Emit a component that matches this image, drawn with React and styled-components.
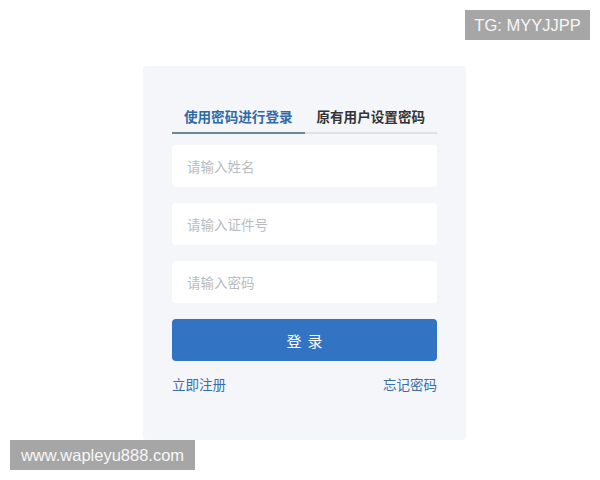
import React from "react";
import styled, { createGlobalStyle } from "styled-components";

const Global = createGlobalStyle`
  html, body { margin: 0; padding: 0; background: #ffffff; }
  body { font-family: "Noto Sans CJK SC", "Noto Sans", sans-serif; }
  * { box-sizing: border-box; }
`;

const Page = styled.div`
  position: relative;
  width: 600px;
  height: 480px;
  padding: 66px 0 0 143px;
  overflow: hidden;
`;

const Card = styled.div`
  width: 323px;
  height: 374px;
  background: #f4f6fa;
  border-radius: 4px;
  padding: 34px 29px 0 29px;
  display: flex;
  flex-direction: column;
`;

const Tabs = styled.div`
  display: flex;
  margin-bottom: 11px;
`;

const Tab = styled.div`
  flex: 1;
  height: 34px;
  line-height: 32px;
  text-align: center;
  font-size: 13.6px;
  font-weight: 700;
  color: ${(p) => (p.$active ? "#2f69a8" : "#333333")};
  border-bottom: 2px solid ${(p) => (p.$active ? "#6f8696" : "#dde2e8")};
`;

const Field = styled.input`
  height: 42px;
  width: 100%;
  border: none;
  outline: none;
  border-radius: 4px;
  background: #ffffff;
  padding: 0 15px;
  margin-bottom: 16px;
  font-family: "Noto Sans CJK SC", sans-serif;
  font-size: 13.5px;
  color: #333;
  &::placeholder { color: #b8bcc2; }
`;

const LoginButton = styled.button`
  height: 42px;
  width: 100%;
  border: none;
  border-radius: 4px;
  background: #3273c4;
  color: #ffffff;
  font-family: "Noto Sans CJK SC", sans-serif;
  font-size: 15px;
  letter-spacing: 6px;
  text-indent: 6px;
  cursor: pointer;
`;

const Links = styled.div`
  display: flex;
  justify-content: space-between;
  margin-top: 13px;
  font-size: 13.5px;
  line-height: 20px;
`;

const Link = styled.a`
  color: #3a6ea8;
  text-decoration: none;
`;

const Watermark = styled.div`
  position: absolute;
  height: 30px;
  line-height: 30px;
  padding: 0;
  background: #a6a6a6;
  color: #f7f7f7;
  font-family: "Liberation Sans", Arial, sans-serif;
  font-size: 16.5px;
  top: ${(p) => p.$top}px;
  left: ${(p) => p.$left}px;
  width: ${(p) => p.$width}px;
  text-align: center;
  white-space: nowrap;
`;

export default function App() {
  return (
    <>
      <Global />
      <Page>
        <Card>
          <Tabs>
            <Tab $active>使用密码进行登录</Tab>
            <Tab>原有用户设置密码</Tab>
          </Tabs>
          <Field placeholder="请输入姓名" />
          <Field placeholder="请输入证件号" />
          <Field type="password" placeholder="请输入密码" />
          <LoginButton>登录</LoginButton>
          <Links>
            <Link href="#">立即注册</Link>
            <Link href="#">忘记密码</Link>
          </Links>
        </Card>
        <Watermark $top={10} $left={465} $width={125}>TG: MYYJJPP</Watermark>
        <Watermark $top={440} $left={10} $width={185}>www.wapleyu888.com</Watermark>
      </Page>
    </>
  );
}
